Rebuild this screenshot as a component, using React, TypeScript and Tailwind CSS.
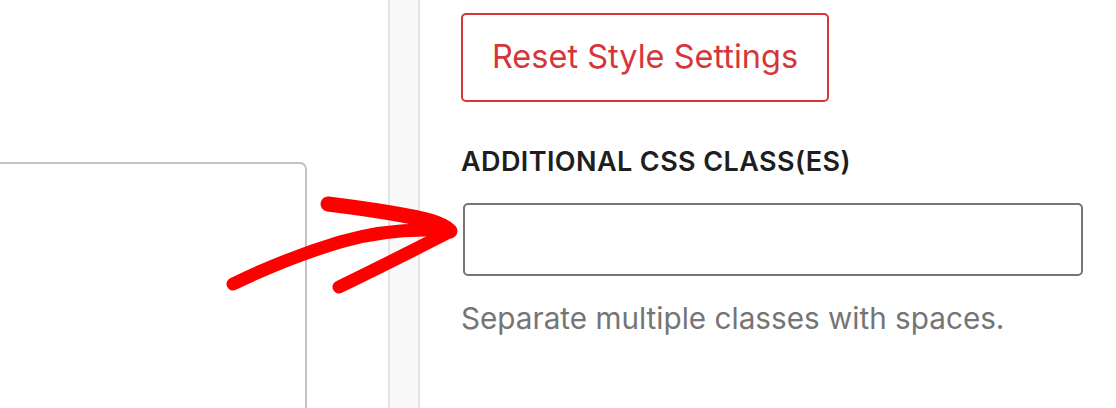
import React from "react";

export default function App() {
  return (
    <div
      className="relative flex h-[408px] w-[1116px] overflow-hidden bg-white"
      style={{ fontFamily: "Inter, 'Noto Sans', sans-serif" }}
    >
      {/* Left canvas */}
      <div className="w-[388px] shrink-0 pt-[162px]">
        <div className="-ml-[10px] h-[300px] w-[317px] rounded-tr-[7px] border-2 border-[#c2c2c2] bg-white" />
      </div>

      {/* Divider strip */}
      <div className="w-[32px] shrink-0 border-l-2 border-r-2 border-[#e4e4e4] bg-[#f9f9f9]" />

      {/* Right panel */}
      <div className="flex flex-1 flex-col pl-[41px] pt-[13px]">
        <button className="flex h-[89px] w-[368px] items-center justify-center rounded-[5px] border-2 border-[#d63638] bg-white text-[32.5px] leading-none text-[#d63638]">
          Reset Style Settings
        </button>
        <div className="mt-[46px] text-[27px] font-semibold uppercase leading-[28px] tracking-[0.015em] text-[#1e1e1e]">
          Additional CSS Class(es)
        </div>
        <div className="ml-[2px] mt-[27px] h-[73px] w-[620px] rounded-[5px] border-2 border-[#757575] bg-white" />
        <div className="mt-[28px] text-[29.7px] leading-[29px] text-[#757575]">
          Separate multiple classes with spaces.
        </div>
      </div>

      {/* Hand-drawn arrow annotation */}
      <svg
        className="pointer-events-none absolute left-0 top-0"
        width="1116"
        height="408"
        viewBox="0 0 1116 408"
        fill="none"
      >
        <path
          d="M233 284 C 262 270, 300 254, 340 242 C 375 232, 410 228, 449 231"
          stroke="#ff0000"
          strokeWidth="13"
          strokeLinecap="round"
          strokeLinejoin="round"
        />
        <path
          d="M328 204 C 360 208, 400 213, 430 221 C 440 224, 447 228, 450 231"
          stroke="#ff0000"
          strokeWidth="15"
          strokeLinecap="round"
          strokeLinejoin="round"
        />
        <path
          d="M339 287 C 370 272, 410 252, 447 233"
          stroke="#ff0000"
          strokeWidth="13"
          strokeLinecap="round"
          strokeLinejoin="round"
        />
      </svg>
    </div>
  );
}
